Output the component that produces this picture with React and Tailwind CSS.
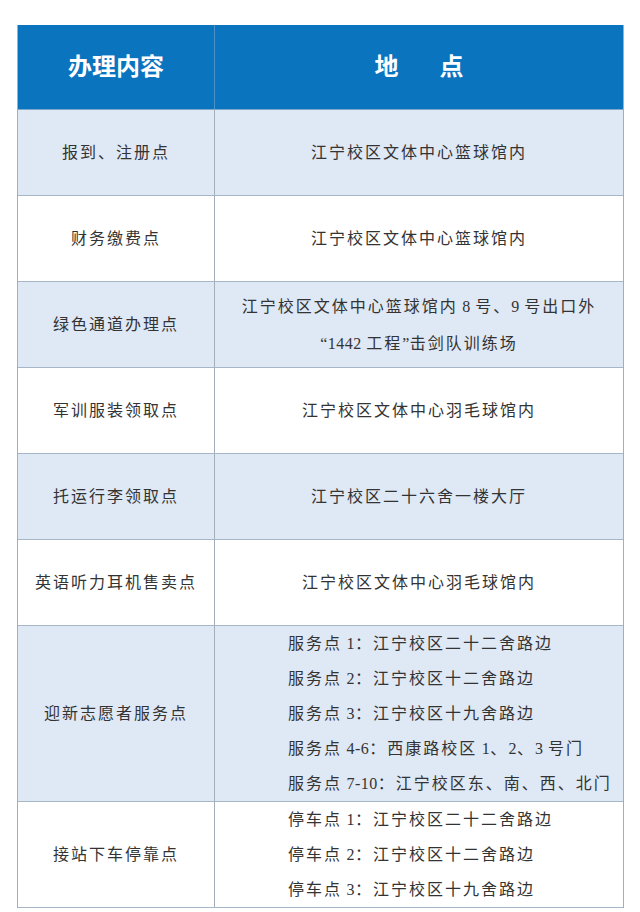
import React from "react";

const FONT = { fontFamily: '"Liberation Serif", "Noto Sans CJK SC", serif' };

function T({ text }) {
  const parts = text.match(/[\x20-\x7e“”]+|[^\x20-\x7e“”]+/g) || [];
  return (
    <>
      {parts.map((p, i) =>
        /^[\x20-\x7e“”]+$/.test(p) ? (
          <span key={i} className="tracking-[0.5px]">{p}</span>
        ) : (
          <span key={i}>{p}</span>
        )
      )}
    </>
  );
}

const rows = [
  { left: "报到、注册点", right: ["江宁校区文体中心篮球馆内"], h: "h-[86px]", bg: "bg-[#dfe8f5]" },
  { left: "财务缴费点", right: ["江宁校区文体中心篮球馆内"], h: "h-[86px]", bg: "bg-white" },
  {
    left: "绿色通道办理点",
    right: ["江宁校区文体中心篮球馆内 8 号、9 号出口外", "“1442 工程”击剑队训练场"],
    h: "h-[86px]",
    bg: "bg-[#dfe8f5]",
  },
  { left: "军训服装领取点", right: ["江宁校区文体中心羽毛球馆内"], h: "h-[86px]", bg: "bg-white" },
  { left: "托运行李领取点", right: ["江宁校区二十六舍一楼大厅"], h: "h-[86px]", bg: "bg-[#dfe8f5]" },
  { left: "英语听力耳机售卖点", right: ["江宁校区文体中心羽毛球馆内"], h: "h-[86px]", bg: "bg-white" },
];

const listRows = [
  {
    left: "迎新志愿者服务点",
    lines: [
      "服务点 1：江宁校区二十二舍路边",
      "服务点 2：江宁校区十二舍路边",
      "服务点 3：江宁校区十九舍路边",
      "服务点 4-6：西康路校区 1、2、3 号门",
      "服务点 7-10：江宁校区东、南、西、北门",
    ],
    h: "h-[176px]",
    bg: "bg-[#dfe8f5]",
  },
  {
    left: "接站下车停靠点",
    lines: [
      "停车点 1：江宁校区二十二舍路边",
      "停车点 2：江宁校区十二舍路边",
      "停车点 3：江宁校区十九舍路边",
    ],
    h: "h-[106px]",
    bg: "bg-white",
  },
];

export default function App() {
  return (
    <div className="w-[640px] h-[912px] bg-white overflow-hidden" style={FONT}>
      <div className="ml-[17px] mt-[25px] w-[607px] border-x border-[#a3aebb]">
        {/* header */}
        <div className="flex h-[85px] bg-[#0a74bf] border-b border-[#7fa7c9]">
          <div className="w-[197px] border-r border-[#4a92c9] flex items-center justify-center text-white text-[24px] font-bold">
            办理内容
          </div>
          <div className="flex-1 flex items-center justify-center gap-[41px] text-white text-[24px] font-bold">
            <span>地</span>
            <span>点</span>
          </div>
        </div>
        {rows.map((r, i) => (
          <div key={i} className={`flex ${r.h} ${r.bg} border-b border-[#a7b6c6] text-[#333333] text-[16px] tracking-[2px]`}>
            <div className="w-[197px] border-r border-[#a3aebb] flex items-center justify-center">
              {r.left}
            </div>
            <div className="flex-1 flex flex-col items-center justify-center leading-[37px]">
              {r.right.map((t, j) => (
                <div key={j} className="whitespace-nowrap"><T text={t} /></div>
              ))}
            </div>
          </div>
        ))}
        {listRows.map((r, i) => (
          <div key={i} className={`flex ${r.h} ${r.bg} border-b border-[#a7b6c6] text-[#333333] text-[16px] tracking-[2px]`}>
            <div className="w-[197px] border-r border-[#a3aebb] flex items-center justify-center">
              {r.left}
            </div>
            <div className="flex-1 flex flex-col justify-center pl-[73px] leading-[35px]">
              {r.lines.map((t, j) => (
                <div key={j} className="whitespace-nowrap"><T text={t} /></div>
              ))}
            </div>
          </div>
        ))}
      </div>
    </div>
  );
}
